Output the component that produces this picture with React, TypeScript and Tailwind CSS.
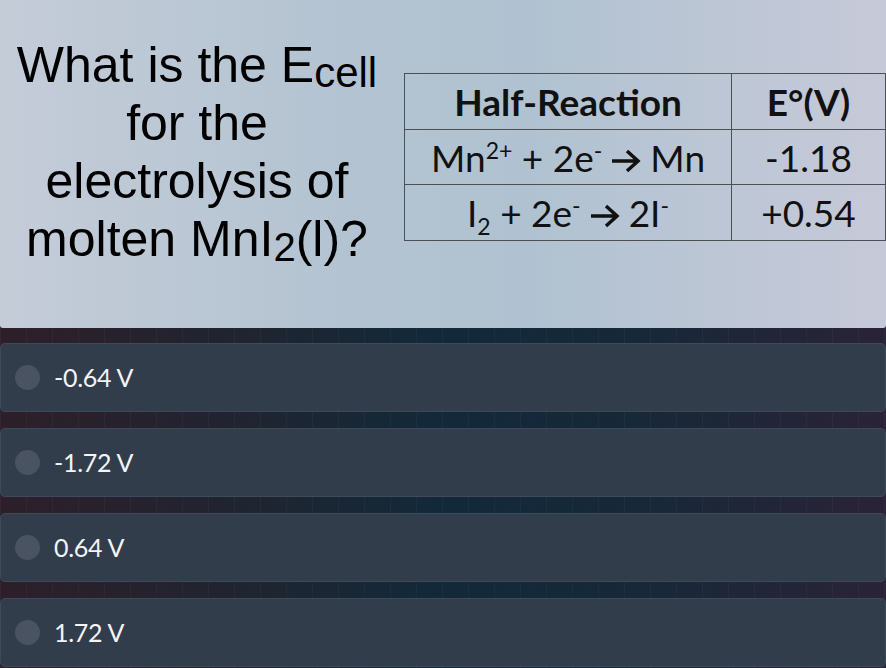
import React from "react";

const options = ["-0.64 V", "-1.72 V", "0.64 V", "1.72 V"];

function Arrow() {
  return (
    <svg
      width="30"
      height="24"
      viewBox="0 0 30 24"
      className="inline-block mx-[9px] align-[-1px]"
    >
      <path
        d="M1 12H27M16 2L27 12L16 22"
        fill="none"
        stroke="#111"
        strokeWidth="3.5"
      />
    </svg>
  );
}

function Sup({ children }: { children: React.ReactNode }) {
  return (
    <span className="relative top-[-13px] text-[23px] leading-none">
      {children}
    </span>
  );
}

export default function App() {
  return (
    <div className="w-[886px] h-[668px] overflow-hidden bg-[repeating-linear-gradient(90deg,rgba(255,255,255,0.03)_0_1px,transparent_1px_26px),linear-gradient(90deg,#2d1f2a,#1e2531_30%,#12293a_50%,#172838_72%,#2a2337)]">
      {/* question panel */}
      <div className="h-[328px] flex rounded-b-[3px] bg-[linear-gradient(90deg,#c4ccd8,#b3c3d1_40%,#b0c2d1_60%,#bcc6d5_80%,#c6c9d8)]">
        <div
          className="w-[394px] pt-[36px] text-center text-[50px] leading-[58px] text-black"
          style={{ fontFamily: '"Liberation Sans", Arial, sans-serif' }}
        >
          <div>
            What is the E
            <span className="relative top-[5px] text-[42px] leading-none">
              cell
            </span>
          </div>
          <div>for the</div>
          <div>electrolysis of</div>
          <div>
            molten MnI
            <span className="relative top-[5px] text-[40px] leading-none">
              2
            </span>
            (l)?
          </div>
        </div>

        <div
          className="ml-[10px] mt-[73px] w-[482px] text-[#111] text-[37px]"
          style={{ fontFamily: "Lato, 'Open Sans', sans-serif" }}
        >
          <table className="w-full border-collapse">
            <tbody>
              <tr className="h-[56px]">
                <td className="w-[327px] border-[1.5px] border-[#4b4f56] text-center font-bold leading-none">
                  Half-Reaction
                </td>
                <td className="border-[1.5px] border-[#4b4f56] text-center font-bold leading-none">
                  E°(V)
                </td>
              </tr>
              <tr className="h-[55px]">
                <td className="border-[1.5px] border-[#4b4f56] text-center whitespace-nowrap leading-none">
                  Mn<Sup>2+</Sup> + 2e<Sup>-</Sup>
                  <Arrow />
                  Mn
                </td>
                <td className="border-[1.5px] border-[#4b4f56] text-center leading-none">
                  -1.18
                </td>
              </tr>
              <tr className="h-[56px]">
                <td className="border-[1.5px] border-[#4b4f56] text-center whitespace-nowrap leading-none">
                  I
                  <span className="relative top-[8px] text-[23px] leading-none">
                    2
                  </span>{" "}
                  + 2e<Sup>-</Sup>
                  <Arrow />
                  2I<Sup>-</Sup>
                </td>
                <td className="border-[1.5px] border-[#4b4f56] text-center leading-none">
                  +0.54
                </td>
              </tr>
            </tbody>
          </table>
        </div>
      </div>

      {/* answer options */}
      <div
        className="pt-[15px] flex flex-col gap-[16px]"
        style={{ fontFamily: "Lato, 'Open Sans', sans-serif" }}
      >
        {options.map((o) => (
          <div
            key={o}
            className="h-[69px] flex items-center rounded-[5px] border border-[#3e4a5a] bg-[#323d4c]"
          >
            <div className="ml-[14px] w-[25px] h-[25px] rounded-full bg-[#4a5362]" />
            <span className="ml-[14px] text-[25px] text-[#f3f4f6] tracking-[-0.3px]">
              {o}
            </span>
          </div>
        ))}
      </div>
    </div>
  );
}
